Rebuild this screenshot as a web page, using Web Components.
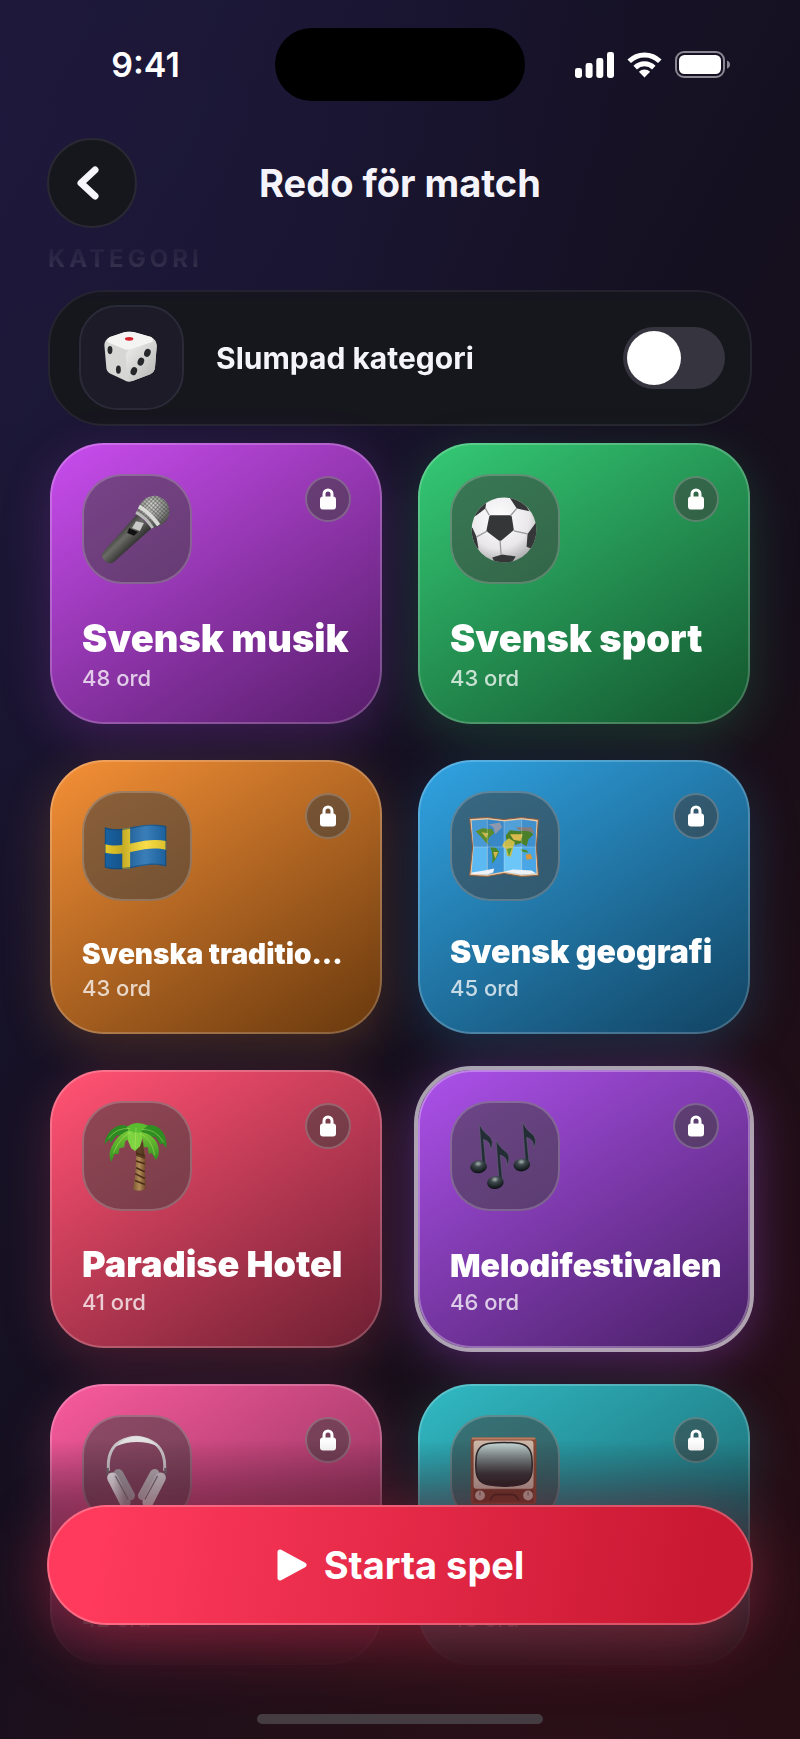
<!DOCTYPE html>
<html lang="sv">
<head>
<meta charset="utf-8">
<meta name="viewport" content="width=device-width, initial-scale=1">
<title>Redo för match</title>
<style>
    body {
        margin: 0;
        min-height: 100vh;
        font-family: Inter, "Liberation Sans", sans-serif;
        color: #f5f4fa;
        background:
            radial-gradient(ellipse 80% 50% at 0% 8%, rgba(31, 25, 62, 0.7), transparent),
            radial-gradient(ellipse 50% 45% at 100% 80%, rgba(42, 13, 20, 0.6), transparent),
            radial-gradient(ellipse 90% 22% at 70% 100%, rgba(46, 16, 24, 0.8), transparent),
            linear-gradient(120deg, #1c1936 0%, #17132b 25%, #15101f 50%, #180f18 72%, #1c0e15 100%);
    }
</style>
</head>
<body>
<match-screen>
    <status-bar slot="status" time="9:41"></status-bar>
    <nav-header slot="header">Redo för match</nav-header>
    <section-label>KATEGORI</section-label>
    <random-row>Slumpad kategori</random-row>
    <category-grid>
        <category-card from="#c54bea" to="#581e6b" size="38" count="48 ord"><emoji-art name="mic"></emoji-art><span slot="title">Svensk musik</span></category-card>
        <category-card from="#33c673" to="#14562e" size="38" count="43 ord"><emoji-art name="ball"></emoji-art><span slot="title">Svensk sport</span></category-card>
        <category-card from="#f08d35" to="#6b3a0e" size="28" count="43 ord"><emoji-art name="flag"></emoji-art><span slot="title">Svenska traditio...</span></category-card>
        <category-card from="#2fa0de" to="#124564" size="32" count="45 ord"><emoji-art name="map"></emoji-art><span slot="title">Svensk geografi</span></category-card>
        <category-card from="#ff5172" to="#702033" size="36" count="41 ord"><emoji-art name="palm"></emoji-art><span slot="title">Paradise Hotel</span></category-card>
        <category-card from="#a94fe6" to="#492066" size="32" count="46 ord" selected><emoji-art name="notes"></emoji-art><span slot="title">Melodifestivalen</span></category-card>
        <category-card from="#f5599a" to="#6e2648" size="38" count="42 ord"><emoji-art name="headphones"></emoji-art></category-card>
        <category-card from="#30b6c0" to="#14535a" size="38" count="48 ord"><emoji-art name="tv"></emoji-art></category-card>
    </category-grid>
    <start-bar slot="footer">Starta spel</start-bar>
</match-screen>

<script>
class MatchScreen extends HTMLElement {
    shadowRoot = this.attachShadow({mode: 'open'});

    connectedCallback() {
        this.shadowRoot.innerHTML = `
        <style>
            * {
                box-sizing: border-box;
            }

            :host {
                display: flex;
                flex-direction: column;
                position: relative;
                min-height: 100vh;
                overflow: hidden;
            }

            /* the list fades out below the header and behind the start button */
            main {
                flex: 1;
                padding: 16px 48px 75px;
                -webkit-mask-image: linear-gradient(transparent 8px, rgba(0, 0, 0, 0.25) 34px, #000 72px, #000 calc(100% - 300px), rgba(0, 0, 0, 0.62) calc(100% - 240px), rgba(0, 0, 0, 0.18) calc(100% - 115px), transparent calc(100% - 64px));
                mask-image: linear-gradient(transparent 8px, rgba(0, 0, 0, 0.25) 34px, #000 72px, #000 calc(100% - 300px), rgba(0, 0, 0, 0.62) calc(100% - 240px), rgba(0, 0, 0, 0.18) calc(100% - 115px), transparent calc(100% - 64px));
            }

            footer {
                position: absolute;
                left: 0;
                right: 0;
                bottom: 0;
            }
        </style>
        <slot name="status"></slot>
        <slot name="header"></slot>
        <main><slot></slot></main>
        <footer><slot name="footer"></slot></footer>
        `;
    }
}

class StatusBar extends HTMLElement {
    shadowRoot = this.attachShadow({mode: 'open'});

    connectedCallback() {
        this.shadowRoot.innerHTML = `
        <style>
            * {
                box-sizing: border-box;
            }

            :host {
                display: grid;
                grid-template-columns: 1fr 250px 1fr;
                align-items: center;
                justify-items: center;
                padding: 28px 16px 0;
                color: #fff;
            }

            .time {
                font-size: 34px;
                line-height: 40px;
                font-weight: 600;
            }

            .island {
                width: 100%;
                height: 73px;
                border-radius: 37px;
                background: #000;
            }

            .icons {
                display: flex;
                align-items: center;
                gap: 13px;
                padding-right: 4px;
            }

            svg {
                display: block;
            }
        </style>
        <span class="time">${this.getAttribute('time')}</span>
        <div class="island"></div>
        <div class="icons">
            <svg width="39" height="26" viewBox="0 0 39 26" fill="#fff">
                <rect x="0" y="16" width="7" height="10" rx="2.4"/>
                <rect x="10.6" y="11" width="7" height="15" rx="2.4"/>
                <rect x="21.3" y="6" width="7" height="20" rx="2.4"/>
                <rect x="32" y="0" width="7" height="26" rx="2.4"/>
            </svg>
            <svg width="35" height="26" viewBox="0 0 35 26" fill="none" stroke="#fff" stroke-width="5">
                <path d="M2.2 9.3A21.6 21.6 0 0 1 32.8 9.3"/>
                <path d="M8.2 15.6A13.3 13.3 0 0 1 26.8 15.6"/>
                <path d="M17.5 25.5L11.9 19.8A8 8 0 0 1 23.1 19.8Z" fill="#fff" stroke="none"/>
            </svg>
            <svg width="56" height="27" viewBox="0 0 56 27">
                <rect x="1" y="1" width="48" height="25" rx="8" fill="none" stroke="#8b8893" stroke-width="2"/>
                <rect x="4" y="4" width="42" height="19" rx="5.5" fill="#fff"/>
                <path d="M52 9.5q3 1 3 4t-3 4z" fill="#8b8893"/>
            </svg>
        </div>
        `;
    }
}

class NavHeader extends HTMLElement {
    shadowRoot = this.attachShadow({mode: 'open'});

    connectedCallback() {
        this.shadowRoot.innerHTML = `
        <style>
            * {
                box-sizing: border-box;
            }

            :host {
                display: grid;
                grid-template-columns: 90px 1fr 90px;
                align-items: center;
                padding: 37px 47px 0;
            }

            button {
                display: grid;
                place-items: center;
                width: 90px;
                height: 90px;
                padding: 0 8px 0 0;
                border: 2px solid #2a2833;
                border-radius: 50%;
                background: #16161d;
            }

            h1 {
                margin: 0;
                text-align: center;
                font-size: 38px;
                line-height: 46px;
                font-weight: 700;
            }
        </style>
        <button type="button" aria-label="Tillbaka">
            <svg width="24" height="36" viewBox="0 0 24 36" fill="none" stroke="#f6f5fb" stroke-width="7" stroke-linecap="round" stroke-linejoin="round">
                <path d="M19 5L5 18L19 31"/>
            </svg>
        </button>
        <h1><slot></slot></h1>
        `;
    }
}

class SectionLabel extends HTMLElement {
    shadowRoot = this.attachShadow({mode: 'open'});

    connectedCallback() {
        this.shadowRoot.innerHTML = `
        <style>
            :host {
                display: block;
                margin-bottom: 17px;
                color: rgba(255, 255, 255, 0.32);
                font-size: 24px;
                line-height: 29px;
                font-weight: 700;
                letter-spacing: 4px;
            }
        </style>
        <slot></slot>
        `;
    }
}

class RandomRow extends HTMLElement {
    shadowRoot = this.attachShadow({mode: 'open'});

    connectedCallback() {
        this.shadowRoot.innerHTML = `
        <style>
            * {
                box-sizing: border-box;
            }

            :host {
                display: block;
            }

            label {
                display: flex;
                align-items: center;
                gap: 32px;
                padding: 13px 25px 14px 29px;
                border: 2px solid #26252f;
                border-radius: 56px;
                background: #16161d;
            }

            .tile {
                display: grid;
                width: 105px;
                height: 105px;
                border: 2px solid #2b2a38;
                border-radius: 38px;
                background: #1c1b27;
            }

            .text {
                flex: 1;
                font-size: 30px;
                line-height: 36px;
                font-weight: 700;
            }

            input {
                appearance: none;
                display: flex;
                align-items: center;
                width: 102px;
                height: 62px;
                margin: 0;
                padding: 4px;
                border-radius: 31px;
                background: #36353f;
            }

            input::before {
                content: "";
                width: 54px;
                height: 54px;
                border-radius: 50%;
                background: #fff;
            }

            input:checked {
                justify-content: flex-end;
                background: #ff3a5c;
            }
        </style>
        <label>
            <span class="tile"><emoji-art name="dice"></emoji-art></span>
            <span class="text"><slot></slot></span>
            <input type="checkbox" role="switch">
        </label>
        `;
    }
}

class CategoryGrid extends HTMLElement {
    shadowRoot = this.attachShadow({mode: 'open'});

    connectedCallback() {
        this.shadowRoot.innerHTML = `
        <style>
            :host {
                display: grid;
                grid-template-columns: 1fr 1fr;
                gap: 36px;
                padding: 17px 2px 0;
            }
        </style>
        <slot></slot>
        `;
    }
}

class CategoryCard extends HTMLElement {
    shadowRoot = this.attachShadow({mode: 'open'});

    connectedCallback() {
        const from = this.getAttribute('from');
        const to = this.getAttribute('to');
        const size = Number(this.getAttribute('size'));
        const line = Math.round(size * 1.12);

        this.shadowRoot.innerHTML = `
        <style>
            * {
                box-sizing: border-box;
            }

            :host {
                display: grid;
                min-width: 0;
            }

            button {
                display: flex;
                flex-direction: column;
                justify-content: space-between;
                gap: 33px;
                min-width: 0;
                padding: 29px 29px 31px 30px;
                border: 2px solid rgba(255, 255, 255, 0.2);
                border-radius: 54px;
                background: linear-gradient(148deg, ${from} 4%, ${to} 98%) border-box;
                box-shadow: 0 14px 50px ${from}38;
                color: #fff;
                font-family: inherit;
                text-align: left;
            }

            :host([selected]) button {
                outline: 4px solid rgba(255, 255, 255, 0.6);
                border-color: rgba(255, 255, 255, 0.3);
                box-shadow: 0 8px 52px ${from}70;
            }

            .top {
                display: flex;
                justify-content: space-between;
                align-items: flex-start;
            }

            .tile {
                display: grid;
                width: 110px;
                height: 110px;
                border: 2px solid rgba(255, 255, 255, 0.2);
                border-radius: 40px;
                background: rgba(64, 64, 64, 0.55);
            }

            .lock {
                display: grid;
                place-items: center;
                width: 46px;
                height: 46px;
                margin-top: 2px;
                border: 2px solid rgba(255, 255, 255, 0.2);
                border-radius: 50%;
                background: rgba(64, 64, 64, 0.55);
            }

            .title {
                display: block;
                min-height: ${line}px;
                margin-bottom: 6px;
                font-size: ${size}px;
                line-height: ${line}px;
                font-weight: 900;
                white-space: nowrap;
            }

            .count {
                display: block;
                color: rgba(255, 255, 255, 0.75);
                font-size: 22px;
                line-height: 25px;
                font-weight: 500;
            }
        </style>
        <button type="button" aria-pressed="${this.hasAttribute('selected')}">
            <span class="top">
                <span class="tile"><slot></slot></span>
                <span class="lock">
                    <svg width="16" height="22" viewBox="0 0 16 22">
                        <path d="M4 10V6a4 4 0 0 1 8 0v4" fill="none" stroke="#fff" stroke-width="3"/>
                        <rect y="8.5" width="16" height="13" rx="3" fill="#fff"/>
                    </svg>
                </span>
            </span>
            <span class="words">
                <span class="title"><slot name="title"></slot></span>
                <span class="count">${this.getAttribute('count')}</span>
            </span>
        </button>
        `;
    }
}

class StartBar extends HTMLElement {
    shadowRoot = this.attachShadow({mode: 'open'});

    connectedCallback() {
        this.shadowRoot.innerHTML = `
        <style>
            * {
                box-sizing: border-box;
            }

            :host {
                display: flex;
                flex-direction: column;
                align-items: center;
                gap: 89px;
                padding: 0 47px 16px;
            }

            button {
                display: flex;
                align-items: center;
                justify-content: center;
                gap: 16px;
                width: 100%;
                height: 120px;
                padding: 0;
                border: 2px solid rgba(255, 255, 255, 0.25);
                border-radius: 60px;
                background: linear-gradient(100deg, #ff3a5c 8%, #c91832 92%) border-box;
                box-shadow: 0 16px 68px rgba(255, 50, 85, 0.38);
                color: #fff;
                font-family: inherit;
                font-size: 38px;
                line-height: 46px;
                font-weight: 700;
            }

            .home {
                width: 286px;
                height: 10px;
                border-radius: 5px;
                background: #443c40;
            }
        </style>
        <button type="button">
            <svg width="32" height="34" viewBox="0 0 32 34">
                <path d="M4 4L28 17L4 30Z" fill="#fff" stroke="#fff" stroke-width="5" stroke-linejoin="round"/>
            </svg>
            <slot></slot>
        </button>
        <div class="home"></div>
        `;
    }
}

const ART = {
    dice: `
        <defs>
            <linearGradient id="r" x1="0" y1="0" x2="1" y2="1"><stop offset="0" stop-color="#f0f0ee"/><stop offset="1" stop-color="#b4b5b2"/></linearGradient>
        </defs>
        <path d="M44 29Q52 26 62 29L76 33Q82 36 82 43L80 67Q79 71 75 73L56 80Q51 82 47 79L32 72Q28 70 28 65L26 42Q26 36 32 33Z" fill="#d6d7d5"/>
        <path d="M44 29Q52 26 62 29L76 33Q80 36 76 39L56 46Q50 48 45 45L30 39Q27 36 32 33Z" fill="#f4f4f2"/>
        <path d="M82 42L80 67Q79 71 75 73L56 80Q51 81 50 76L49 53Q49 48 55 46L76 39Q81 37 82 42Z" fill="url(#r)"/>
        <ellipse cx="52.5" cy="35" rx="4.5" ry="2" fill="#d8202c"/>
        <ellipse cx="32" cy="47" rx="2.6" ry="4.4" fill="#26272a"/>
        <ellipse cx="41" cy="68" rx="2.6" ry="4.4" fill="#26272a"/>
        <ellipse cx="72" cy="50" rx="3.4" ry="4.4" fill="#26272a" transform="rotate(20 72 50)"/>
        <ellipse cx="65" cy="59.5" rx="3.4" ry="4.4" fill="#26272a" transform="rotate(20 65 59.5)"/>
        <ellipse cx="57.5" cy="69.5" rx="3.4" ry="4.4" fill="#26272a" transform="rotate(20 57.5 69.5)"/>`,
    mic: `
        <defs>
            <linearGradient id="b" x1="0.3" y1="0.3" x2="0.7" y2="0.7"><stop offset="0" stop-color="#2b2b2b"/><stop offset="0.4" stop-color="#6a6a66"/><stop offset="1" stop-color="#1c1c1c"/></linearGradient>
            <radialGradient id="h" cx="0.45" cy="0.3" r="0.7"><stop offset="0" stop-color="#d6d6d2"/><stop offset="0.6" stop-color="#8d8f8b"/><stop offset="1" stop-color="#4a4b49"/></radialGradient>
            <pattern id="m" width="3" height="3" patternUnits="userSpaceOnUse" patternTransform="rotate(42)"><path d="M0 0H3M0 0V3" stroke="#3b3c3a" stroke-width="0.8"/></pattern>
        </defs>
        <path d="M55 40L70 54L32 88Q27 92 22 87Q17 83 21 78Z" fill="url(#b)"/>
        <path d="M55 37Q60 21 74 21Q88 24 88 38Q87 50 71 54Z" fill="url(#h)"/>
        <path d="M55 37Q60 21 74 21Q88 24 88 38Q87 50 71 54Z" fill="url(#m)"/>
        <path d="M57 32Q68 38 77 51" stroke="#d9d9d6" stroke-width="4" fill="none"/>
        <path d="M54 38Q64 43 71 54" stroke="#babbb8" stroke-width="3" fill="none"/>
        <path d="M54 47L62 49L58 57L50 54Z" fill="#c9c9c6"/>
        <path d="M47 54L56 58L52 62L45 59Z" fill="#111"/>`,
    ball: `
        <defs>
            <radialGradient id="w" cx="0.42" cy="0.32" r="0.72"><stop offset="0" stop-color="#fff"/><stop offset="0.65" stop-color="#e9e7ea"/><stop offset="1" stop-color="#a9a8aa"/></radialGradient>
            <clipPath id="c"><circle cx="54" cy="56" r="33"/></clipPath>
        </defs>
        <circle cx="54" cy="56" r="33" fill="url(#w)"/>
        <g clip-path="url(#c)" fill="#353637">
            <path d="M40 41H60Q62 41 62 43L64 56L51 67Q50 67 49 67L36 57L39 42Z"/>
            <path d="M59 22L73 26L80 37L67 34Z"/>
            <path d="M21 44L27 26L36 27L35 34L26 41Z"/>
            <path d="M88 46L84 52L78 60L77 73L84 76L90 60Z"/>
            <path d="M18 52L22 54L26 63L28 75L22 74Z"/>
            <path d="M42 84L52 81L66 83L60 92L46 92Z"/>
        </g>
        <path d="M39 41L35 34M61 41L67 34M64 57L78 60M50 67L51 81M37 57L26 63" stroke="#99989a" stroke-width="1.3" fill="none"/>`,
    flag: `
        <defs>
            <linearGradient id="s" x1="0" x2="1"><stop offset="0" stop-color="#000" stop-opacity="0.05"/><stop offset="0.3" stop-color="#000" stop-opacity="0.2"/><stop offset="0.65" stop-color="#fff" stop-opacity="0.14"/><stop offset="1" stop-color="#000" stop-opacity="0.12"/></linearGradient>
            <clipPath id="c"><path d="M22 36C42 43 60 28 85 35V76C64 69 44 84 22 77Z"/></clipPath>
        </defs>
        <g clip-path="url(#c)">
            <path d="M20 28H88V84H20Z" fill="#1a69ad"/>
            <path d="M40 28H48V84H40Z" fill="#f7d72c"/>
            <path d="M22 53C42 59 60 45 85 50V59C62 53 44 67 22 62Z" fill="#f7d72c"/>
            <path d="M20 28H88V84H20Z" fill="url(#s)"/>
            <path d="M22 36C42 43 60 28 85 35V76C64 69 44 84 22 77Z" fill="none" stroke="#123b60" stroke-opacity="0.5" stroke-width="2.5"/>
        </g>`,
    map: `
        <path d="M19 27L37 26L54 28L72 26L89 28L87 56L89 85L72 86L54 83L37 86L19 85L22 56Z" fill="#e8c9a6" stroke="#8a5a3c" stroke-width="1"/>
        <path d="M21 29L37 28V84L21 83L23 56Z" fill="#5db9f2"/>
        <path d="M37 28L54 30V81L37 84Z" fill="#3b94d6"/>
        <path d="M54 30L72 28V84L54 81Z" fill="#6cc6f8"/>
        <path d="M72 28L87 30L86 56L87 83L72 84Z" fill="#4aa6e4"/>
        <path d="M21 29L37 28L54 30L72 28L87 30L86 56H23Z" fill="#3579b8" opacity="0.5"/>
        <path d="M25 40L32 37L42 38L44 42L39 46L37 51L41 54L36 52L31 46Z" fill="#5d8c2c"/>
        <path d="M31 41L38 42L36 47Z" fill="#c9b850"/>
        <path d="M38 33L50 31L52 36L45 43L43 36Z" fill="#8d98ac"/>
        <path d="M40 56L46 57L49 61L45 69L42 73Q43 63 40 56Z" fill="#4b8a2c"/>
        <path d="M43 61L48 61L45 68Z" fill="#d6b64c"/>
        <path d="M56 44L60 39L70 40L77 38L84 43L79 48L77 55L71 52L66 54L62 50L56 48Z" fill="#4b7f28"/>
        <path d="M54 51L59 47L65 51L63 58L61 66L57 65L56 58L52 55Z" fill="#c9bb48"/>
        <path d="M60 43L73 43L71 50L64 49Z" fill="#d8bb4c"/>
        <path d="M57 58L62 57L59 66Z" fill="#579a38"/>
        <path d="M66 36L82 36L85 42L79 40L69 39Z" fill="#877c7c"/>
        <path d="M71 58L77 59L79 62L73 61Z" fill="#4a8e35"/>
        <path d="M76 64L81 63L83 68L77 69Z" fill="#d9973b"/>
        <path d="M21 82L34 80L44 78L43 82L37 84L21 83.5ZM54 81L63 79L82 80L87 83L72 84Z" fill="#eef2f6"/>
        <path d="M37 28V84M54 30V81M72 28V84M23 56H86" stroke="#fff" stroke-opacity="0.3" stroke-width="0.8"/>`,
    palm: `
        <defs>
            <linearGradient id="t" x1="0" y1="0" x2="1" y2="0"><stop offset="0" stop-color="#7b5732"/><stop offset="0.5" stop-color="#b08a55"/><stop offset="1" stop-color="#6b4424"/></linearGradient>
            <linearGradient id="l" x1="0" y1="0" x2="0" y2="1"><stop offset="0" stop-color="#7acb36"/><stop offset="1" stop-color="#338f22"/></linearGradient>
        </defs>
        <path d="M54 40L61 41Q65 58 63 70L64 88Q57 92 51 89Q54 74 54 60Z" fill="url(#t)"/>
        <path d="M54 40L61 41L63 58L54 55Z" fill="#3f2715" opacity="0.7"/>
        <path d="M54 52L63 55M54 60L63 63M54 67L63 71M53 73L63 78M53 80L63 84" stroke="#4a2c17" stroke-width="1.6"/>
        <path d="M52 30Q44 20 34 25Q23 31 22 43L27 38L28 42L34 34L40 34Z" fill="#2d8a22"/>
        <path d="M56 29Q68 19 78 27Q86 34 85 47L81 42L79 43L74 36L66 34Z" fill="#2f8d22"/>
        <path d="M52 28Q36 30 29 46Q25 54 29 61L32 53L36 53L37 47L42 46L43 40L51 36Z" fill="url(#l)"/>
        <path d="M56 30Q74 32 77 47Q78 55 74 59L70 52L67 53L66 46L62 46L61 39Z" fill="url(#l)"/>
        <path d="M54 23Q43 24 46 40L49 47L53 50L58 45Q64 32 54 23Z" fill="#7ed341"/>
        <path d="M44 26Q54 18 66 24L58 31H50Z" fill="#58bb30"/>
        <path d="M51 30Q38 34 31 52M58 32Q70 37 73 54M54 26L53 47M48 27Q34 26 26 37M60 28Q74 27 82 41" stroke="#b3ec64" stroke-width="0.5" fill="none"/>`,
    notes: `
        <defs>
            <radialGradient id="n" cx="0.5" cy="0.25" r="0.7"><stop offset="0" stop-color="#a7b3b0"/><stop offset="0.35" stop-color="#3d484c"/><stop offset="1" stop-color="#0e1317"/></radialGradient>
            <g id="note">
                <path d="M3 0L0 -42Q4 -34 9 -31Q16 -26 11 -16Q12 -25 4 -27L6.500 0Z" fill="#232d36" stroke="#67707a" stroke-opacity="0.6" stroke-width="0.7"/>
                <ellipse cx="-1" cy="1" rx="8.500" ry="6.500" fill="url(#n)" transform="rotate(-8)"/>
            </g>
        </defs>
        <use href="#note" x="29" y="65"/>
        <use href="#note" x="46" y="81"/>
        <use href="#note" x="73" y="63"/>`,
    headphones: `
        <defs>
            <linearGradient id="g" x1="0" x2="1"><stop offset="0" stop-color="#f2eff1"/><stop offset="1" stop-color="#9f989d"/></linearGradient>
        </defs>
        <path d="M26 56Q24 34 38 26Q54 17 70 26Q85 34 83 56" fill="none" stroke="#cdc8cb" stroke-width="3"/>
        <path d="M33 31Q54 10 77 31Q55 22 33 31Z" fill="#e4e1e3"/>
        <path d="M25 53V59M84 53V59" stroke="#6f666c" stroke-width="2.5"/>
        <path d="M36 59L48 81" stroke="#a39da1" stroke-width="10" stroke-linecap="round"/>
        <path d="M30 63L43 88" stroke="url(#g)" stroke-width="11" stroke-linecap="round"/>
        <path d="M73 59L61 81" stroke="#bab4b8" stroke-width="10" stroke-linecap="round"/>
        <path d="M79 63L66 88" stroke="#d3ced1" stroke-width="11" stroke-linecap="round"/>
        <path d="M33 61L46 85M76 61L63 85" stroke="#7b7378" stroke-width="1.3"/>`,
    tv: `
        <defs>
            <linearGradient id="v" x1="0" y1="0" x2="0" y2="1"><stop offset="0" stop-color="#c9dad9"/><stop offset="0.3" stop-color="#869392"/><stop offset="0.7" stop-color="#3b3a3d"/><stop offset="1" stop-color="#241f22"/></linearGradient>
        </defs>
        <rect x="20" y="22" width="67" height="68" rx="4" fill="#8a4c38"/>
        <rect x="21" y="22" width="65" height="2" rx="1" fill="#b87d62"/>
        <rect x="23" y="25" width="61" height="49" rx="3" fill="#cdb7a9"/>
        <path d="M38 28Q54 26 70 28Q82 30 82.5 44Q83 50 82.5 55Q82 68 70 70Q54 73 38 70Q26 68 25.5 55Q25 50 25.5 44Q26 30 38 28Z" fill="url(#v)" stroke="#2c2628" stroke-width="1.5"/>
        <rect x="23" y="75" width="61" height="13" fill="#763c2c"/>
        <path d="M40 86Q42 80 46 80H62Q66 80 69 86" fill="none" stroke="#4f281f" stroke-width="2"/>
        <circle cx="29.5" cy="81" r="5" fill="#cdb9ac"/>
        <circle cx="78.5" cy="81" r="5" fill="#cdb9ac"/>
        <path d="M29.5 77V81M78.5 77V81" stroke="#7d6a60" stroke-width="1.2"/>`
};

class EmojiArt extends HTMLElement {
    shadowRoot = this.attachShadow({mode: 'open'});

    connectedCallback() {
        this.shadowRoot.innerHTML = `
        <style>
            :host {
                display: block;
                overflow: hidden;
            }

            svg {
                display: block;
                width: 100%;
                height: 100%;
            }
        </style>
        <svg viewBox="1 1 108 108" aria-hidden="true">${ART[this.getAttribute('name')]}</svg>
        `;
    }
}

customElements.define('match-screen', MatchScreen);
customElements.define('status-bar', StatusBar);
customElements.define('nav-header', NavHeader);
customElements.define('section-label', SectionLabel);
customElements.define('random-row', RandomRow);
customElements.define('category-grid', CategoryGrid);
customElements.define('category-card', CategoryCard);
customElements.define('start-bar', StartBar);
customElements.define('emoji-art', EmojiArt);
</script>
</body>
</html>
